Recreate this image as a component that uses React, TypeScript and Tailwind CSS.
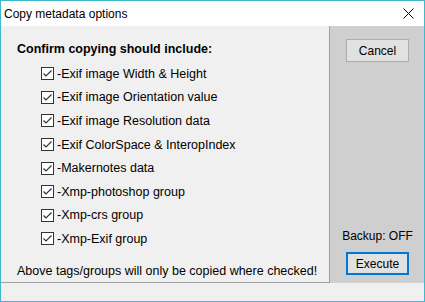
import { useState } from 'react';

const options = [
  '-Exif image Width & Height',
  '-Exif image Orientation value',
  '-Exif image Resolution data',
  '-Exif ColorSpace & InteropIndex',
  '-Makernotes data',
  '-Xmp-photoshop group',
  '-Xmp-crs group',
  '-Xmp-Exif group',
];

function CheckBox({ checked, onToggle }: { checked: boolean; onToggle: () => void }) {
  return (
    <button
      onClick={onToggle}
      className="w-[13px] h-[13px] border border-[#333333] bg-white flex items-center justify-center shrink-0"
    >
      {checked && (
        <svg width="11" height="11" viewBox="0 0 11 11">
          <path d="M1.5 5.5 L4 8 L9.5 2.5" fill="none" stroke="#333333" strokeWidth="1.2" />
        </svg>
      )}
    </button>
  );
}

export default function App() {
  const [checked, setChecked] = useState(options.map(() => true));

  return (
    <div
      className="w-[425px] h-[302px] border border-[#3fb8cd] bg-[#f0f0f0] flex flex-col text-[12.5px] text-black overflow-hidden"
      style={{ fontFamily: '"Liberation Sans", Arial, sans-serif' }}
    >
      {/* title bar */}
      <div className="h-[25px] bg-white flex items-center justify-between pl-[3px] pr-[10px]">
        <span className="text-[12px]">Copy metadata options</span>
        <svg width="11" height="11" viewBox="0 0 11 11">
          <path d="M0.5 0.5 L10.5 10.5 M10.5 0.5 L0.5 10.5" stroke="#000" strokeWidth="1" />
        </svg>
      </div>

      <div className="h-[257px] flex">
        <div className="w-[329px] border-r border-b border-[#a0a0a0] flex flex-col">
          <div className="pl-[16px] pt-[15px] font-bold leading-[16px]">
            Confirm copying should include:
          </div>
          <div className="pl-[40px] pt-[5px] flex flex-col">
            {options.map((o, i) => (
              <div key={o} className="h-[23.6px] flex items-center gap-[3px]">
                <CheckBox
                  checked={checked[i]}
                  onToggle={() => setChecked(checked.map((c, j) => (j === i ? !c : c)))}
                />
                <span className="leading-[14px]">{o}</span>
              </div>
            ))}
          </div>
          <div className="pl-[16px] mt-[12px] leading-[16px]">
            Above tags/groups will only be copied where checked!
          </div>
        </div>

        <div className="flex-1 bg-[#cfcfcf] flex flex-col items-start pl-[16px] pt-[13px]">
          <button className="w-[63px] h-[23px] border border-[#adadad] bg-[#e1e1e1] text-[12px]">
            Cancel
          </button>
          <div className="mt-auto w-[63px] flex justify-center whitespace-nowrap text-[12px] leading-[16px] mb-[8px]">
            Backup: OFF
          </div>
          <button className="w-[63px] h-[23px] border-2 border-[#0078d7] bg-[#e1e1e1] text-[12px] mb-[8px]">
            Execute
          </button>
        </div>
      </div>

      <div className="flex-1" />
    </div>
  );
}
